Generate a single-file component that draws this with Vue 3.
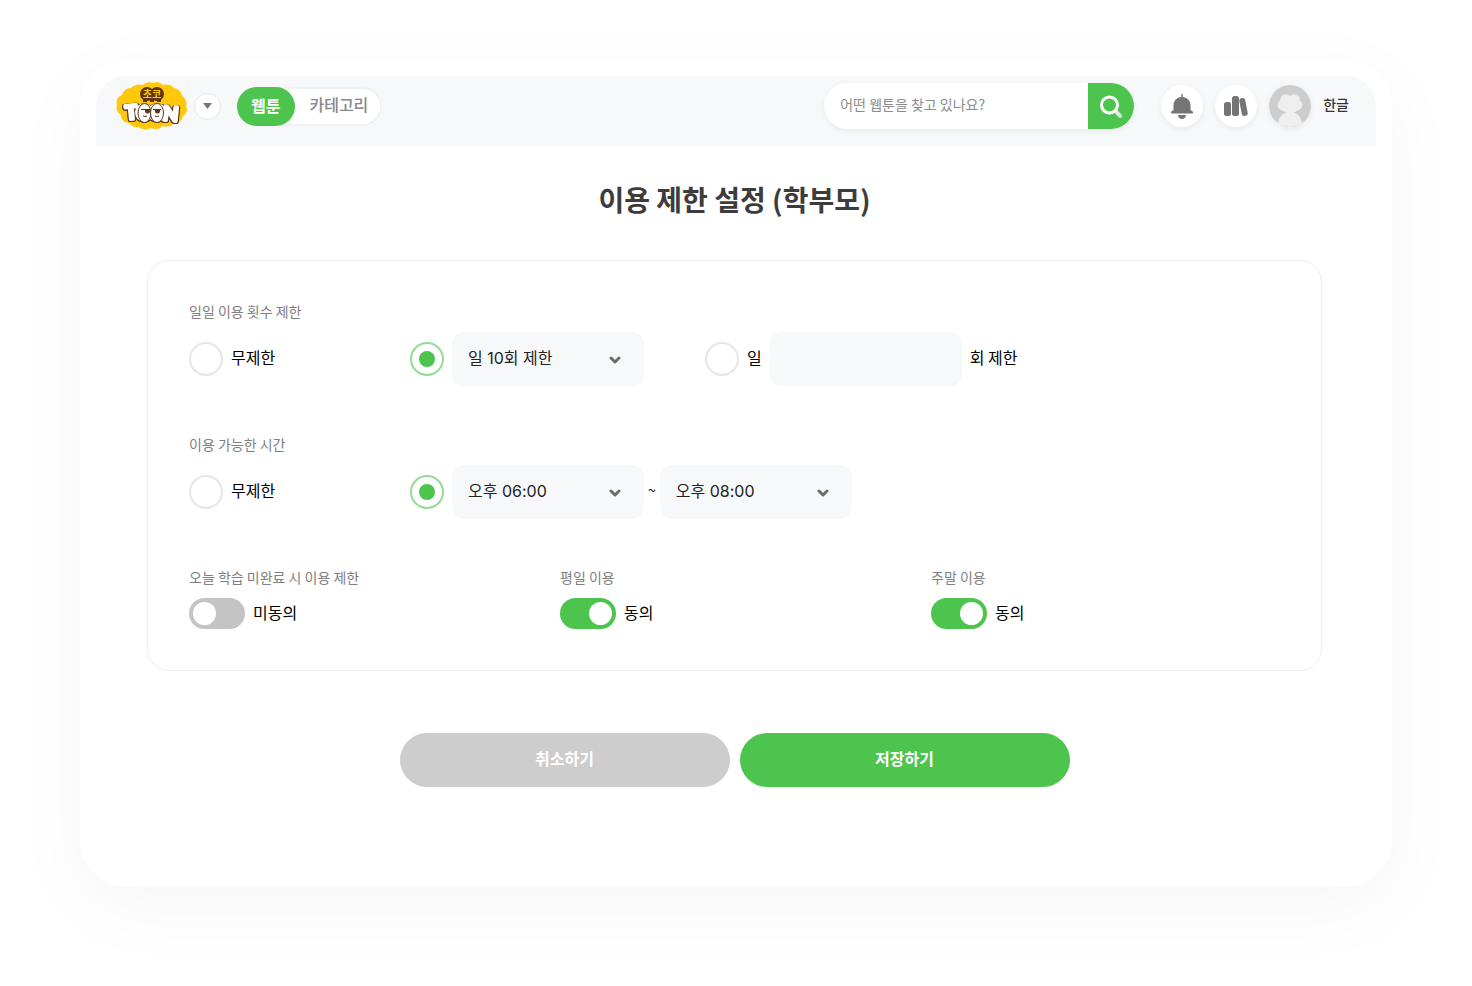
<template>
  <div class="page">
    <div class="window">
      <header class="top-bar">
        <a href="#" class="logo" aria-label="초코 TOON">
          <svg width="72" height="50" viewBox="0 0 72 50">
            <path
              d="M27 4 Q31 0 37 2 Q42 -1 47 4 Q54 2 58 7 Q65 8 66 15 Q72 19 70 25 Q73 31 67 35 Q66 42 58 42 Q54 47 47 45 Q42 50 35 47 Q28 51 23 46 Q16 47 13 42 Q5 41 5 34 Q-1 30 1 24 Q-1 17 6 14 Q8 7 15 7 Q20 2 27 4Z"
              fill="#ffc80a"
            />
            <circle cx="31" cy="13" r="7" fill="#5c3517" />
            <circle cx="41" cy="13" r="7" fill="#5c3517" />
            <path d="M27 17h18v4h-4v-2h-3v2h-4v-2h-3v2h-4z" fill="#5c3517" />
            <text x="36" y="17" class="logo-small">초코</text>
            <text x="16 28 41 54" y="39" rotate="-6 0 0 6" class="logo-big">TOON</text>
            <g stroke="#5c3517" stroke-width="1">
              <ellipse cx="28.500" cy="32" rx="6.500" ry="9.500" fill="#fff" />
              <ellipse cx="41" cy="32" rx="6.500" ry="9.500" fill="#fff" />
              <path d="M25 28.500h9M37 28.500h8M27 35q2 1 4 0M39 35q2 1 4 0" fill="none" />
            </g>
            <path d="M29 28h5v2a2.500 2.500 0 0 1-5 0zM39 28h5v2a2.500 2.500 0 0 1-5 0z" fill="#5c3517" />
          </svg>
        </a>
        <button type="button" class="service-toggle" aria-label="서비스 선택">
          <svg width="9" height="6" viewBox="0 0 9 6"><path d="M0 0h9L4.500 6z" fill="#777" /></svg>
        </button>

        <nav class="tabs">
          <a href="#" class="tab active">웹툰</a>
          <a href="#" class="tab">카테고리</a>
        </nav>

        <form class="search" @submit.prevent>
          <input v-model="keyword" type="text" placeholder="어떤 웹툰을 찾고 있나요?" aria-label="웹툰 검색" />
          <button type="submit" aria-label="검색">
            <svg width="24" height="26" viewBox="0 0 24 26" fill="none">
              <path d="M17 18.500l4 4.500" stroke="#dceedd" stroke-width="4" stroke-linecap="round" />
              <circle cx="10.500" cy="12" r="8" stroke="#fff" stroke-width="3" />
            </svg>
          </button>
        </form>

        <div class="user-menu">
          <button type="button" class="round-button" aria-label="알림">
            <svg width="24" height="26" viewBox="0 0 24 26" fill="#757575">
              <path d="M11.300 1.500q.7-1.500 1.400 0V4c5 .6 7.800 4 7.800 8.500V17l2 1.300q1.500 2.200-.5 2.200H2q-2 0-.5-2.200l2-1.300v-4.500C3.500 8 6.300 4.600 11.300 4z" />
              <path d="M8 22h8q-.5 4-4 4t-4-4z" />
            </svg>
          </button>
          <button type="button" class="round-button" aria-label="내 서재">
            <svg width="24" height="22" viewBox="0 0 24 22" fill="#757575">
              <rect x="0" y="7" width="7" height="14" rx="2.500" />
              <rect x="8" y="1" width="7" height="20" rx="2.500" />
              <rect x="16.500" y="3" width="6" height="18" rx="2.500" transform="rotate(-11 19.500 12)" />
            </svg>
          </button>
          <button type="button" class="round-button" aria-label="내 정보">
            <svg width="42" height="42" viewBox="0 0 41 41">
              <circle cx="20.500" cy="20.500" r="20.500" fill="#cdcdcd" />
              <g fill="#efefef">
                <circle cx="16.500" cy="14.500" r="5.500" />
                <circle cx="24.500" cy="14.500" r="5.500" />
                <circle cx="14" cy="19.500" r="5.500" />
                <circle cx="27" cy="19.500" r="5.500" />
                <ellipse cx="20.500" cy="20" rx="9" ry="7.500" />
                <path d="M9 37.500C9 31 14 26.500 20.500 26.500S32 31 32 37.500A20.500 20.500 0 0 1 9 37.500Z" />
              </g>
            </svg>
          </button>
          <a href="#" class="user-name">한글</a>
        </div>
      </header>

      <main class="content">
        <h1>이용 제한 설정 (학부모)</h1>

        <form @submit.prevent>
          <div class="panel">
            <section class="setting" role="radiogroup" aria-labelledby="count-title">
              <h2 id="count-title">일일 이용 횟수 제한</h2>
              <div class="options">
                <label class="option unlimited">
                  <input v-model="countMode" type="radio" name="count" value="none" />
                  <span class="caption">무제한</span>
                </label>
                <div class="option preset">
                  <input v-model="countMode" type="radio" name="count" value="preset" aria-label="일 제한 횟수 선택" />
                  <div class="select-box">
                    <select v-model="dailyCount" aria-label="일일 이용 횟수">
                      <option v-for="n in counts" :key="n" :value="n">일 {{ n }}회 제한</option>
                    </select>
                    <svg width="12" height="8" viewBox="0 0 12 8"><path d="M2 2l4 4 4-4" /></svg>
                  </div>
                </div>
                <div class="option">
                  <input id="count-custom" v-model="countMode" type="radio" name="count" value="custom" />
                  <label for="count-custom" class="caption">일</label>
                  <input id="custom-count" v-model="customCount" type="text" class="count-input" />
                  <label for="custom-count" class="caption">회 제한</label>
                </div>
              </div>
            </section>

            <section class="setting" role="radiogroup" aria-labelledby="time-title">
              <h2 id="time-title">이용 가능한 시간</h2>
              <div class="options">
                <label class="option unlimited">
                  <input v-model="timeMode" type="radio" name="time" value="none" />
                  <span class="caption">무제한</span>
                </label>
                <div class="option">
                  <input v-model="timeMode" type="radio" name="time" value="range" aria-label="시간 범위 선택" />
                  <div class="time-range">
                    <div class="select-box">
                      <select v-model="startTime" aria-label="시작 시간">
                        <option v-for="t in times" :key="t">{{ t }}</option>
                      </select>
                      <svg width="12" height="8" viewBox="0 0 12 8"><path d="M2 2l4 4 4-4" /></svg>
                    </div>
                    <span class="caption tilde">~</span>
                    <div class="select-box">
                      <select v-model="endTime" aria-label="종료 시간">
                        <option v-for="t in times" :key="t">{{ t }}</option>
                      </select>
                      <svg width="12" height="8" viewBox="0 0 12 8"><path d="M2 2l4 4 4-4" /></svg>
                    </div>
                  </div>
                </div>
              </div>
            </section>

            <div class="agreements">
              <section v-for="item in agreements" :key="item.id" class="setting">
                <h2 :id="item.id">{{ item.title }}</h2>
                <label class="switch">
                  <input v-model="item.on" type="checkbox" role="switch" :aria-describedby="item.id" />
                  <span class="caption">{{ item.on ? '동의' : '미동의' }}</span>
                </label>
              </section>
            </div>
          </div>

          <div class="actions">
            <button type="button" class="cancel">취소하기</button>
            <button type="submit" class="save">저장하기</button>
          </div>
        </form>
      </main>
    </div>
  </div>
</template>

<script setup>
import { ref } from 'vue'

const keyword = ref('')

const counts = [5, 10, 15, 20]
const countMode = ref('preset')
const dailyCount = ref(10)
const customCount = ref('')

const times = ['오후 05:00', '오후 06:00', '오후 07:00', '오후 08:00', '오후 09:00']
const timeMode = ref('range')
const startTime = ref('오후 06:00')
const endTime = ref('오후 08:00')

const agreements = ref([
  { id: 'study', title: '오늘 학습 미완료 시 이용 제한', on: false },
  { id: 'weekday', title: '평일 이용', on: true },
  { id: 'weekend', title: '주말 이용', on: true }
])
</script>

<style>
body {
  margin: 0;
  background: #fff;
}
</style>

<style scoped>
.page {
  padding: 60px 80px 100px;
  font-family: "Noto Sans CJK KR", sans-serif;
  font-size: 16px;
  line-height: 24px;
  color: #000;
}

.page *,
.page *::before {
  box-sizing: border-box;
}

button,
input,
select {
  margin: 0;
  padding: 0;
  border: 0;
  font: inherit;
  color: inherit;
}

button {
  cursor: pointer;
}

a {
  color: inherit;
  text-decoration: none;
}

svg {
  display: block;
}

.window {
  padding: 16px 16px 99px;
  border-radius: 46px;
  background: #fff;
  box-shadow: 0 20px 80px rgba(0, 0, 0, 0.04);
}

/* 상단 바 */
.top-bar {
  display: flex;
  align-items: center;
  padding: 5px 27px 15px 20px;
  border-radius: 30px 30px 0 0;
  background: #f7f8fa;
}

.logo-small {
  font-size: 10px;
  font-weight: 700;
  fill: #ffc80a;
  text-anchor: middle;
}

.logo-big {
  font-family: "Lato", sans-serif;
  font-size: 20px;
  font-weight: 900;
  fill: #fff;
  stroke: #fff;
  stroke-width: 3px;
  stroke-linejoin: round;
  text-anchor: middle;
  filter: drop-shadow(1px 0 0 #5c3517) drop-shadow(-1px 0 0 #5c3517) drop-shadow(0 1px 0 #5c3517);
}

.service-toggle {
  display: flex;
  align-items: center;
  justify-content: center;
  width: 27px;
  height: 27px;
  margin-left: 6px;
  border: 1px solid #e6e7e9;
  border-radius: 50%;
  background: #fff;
}

.tabs {
  display: flex;
  height: 39px;
  margin-left: 16px;
  border: 2px solid #f0f1f2;
  border-left: 0;
  border-radius: 20px;
  background: #fff;
  font-weight: 500;
}

.tab {
  display: flex;
  align-items: center;
  padding: 0 12px 4px 14px;
  color: #888;
}

.tab.active {
  margin: -2px 0;
  padding: 0 15px 2px 14px;
  border-radius: 20px;
  background: #4dc44d;
  color: #fff;
  font-weight: 700;
}

.search {
  display: flex;
  width: 310px;
  height: 46px;
  margin-left: auto;
  border-radius: 23px;
  overflow: hidden;
  background: #fff;
  box-shadow: 0 2px 6px rgba(0, 0, 0, 0.06);
}

.search input {
  flex: 1;
  min-width: 0;
  padding: 0 16px 4px;
  background: transparent;
  font-size: 14px;
  outline: none;
}

.search input::placeholder {
  color: #8c8c8c;
  opacity: 1;
}

.search button {
  display: flex;
  align-items: center;
  justify-content: center;
  width: 46px;
  background: #4dc44d;
}

.user-menu {
  display: flex;
  align-items: center;
  gap: 12px;
  margin-left: 27px;
}

.round-button {
  display: flex;
  align-items: center;
  justify-content: center;
  width: 42px;
  height: 42px;
  border-radius: 50%;
  background: #fff;
  box-shadow: 0 2px 6px rgba(0, 0, 0, 0.06);
}

.user-name {
  padding-bottom: 4px;
  font-size: 14px;
  font-weight: 500;
  color: #333;
}

/* 본문 */
.content {
  padding: 33px 54px 0 51px;
}

h1 {
  margin: 0 0 41px;
  font-size: 28px;
  font-weight: 700;
  line-height: 40px;
  text-align: center;
  color: #3c3c3c;
}

.panel {
  display: flex;
  flex-direction: column;
  gap: 49px;
  padding: 41px;
  border: 1px solid #eee;
  border-radius: 22px;
}

h2 {
  margin: 0 0 12px;
  font-size: 14px;
  font-weight: 400;
  line-height: 18px;
  color: #808080;
}

.options {
  display: flex;
  align-items: center;
  min-height: 54px;
}

.option {
  display: flex;
  align-items: center;
  gap: 8px;
}

.caption {
  padding-bottom: 4px;
}

.unlimited {
  min-width: 221px;
}

.preset {
  min-width: 295px;
}

input[type="radio"] {
  flex: none;
  display: grid;
  place-content: center;
  width: 34px;
  height: 34px;
  border: 2px solid #e6e6e6;
  border-radius: 50%;
  appearance: none;
  background: #fff;
}

input[type="radio"]:checked {
  border-color: #94dc94;
}

input[type="radio"]:checked::before {
  content: "";
  width: 16px;
  height: 16px;
  border-radius: 50%;
  background: #4dc44d;
}

.select-box {
  position: relative;
}

.select-box select,
.count-input {
  width: 192px;
  height: 54px;
  padding: 0 16px 2px;
  border-radius: 12px;
  appearance: none;
  background: #f7f8fa;
  font-family: "Inter", "Noto Sans CJK KR", sans-serif;
  color: #222;
}

.select-box svg {
  position: absolute;
  top: 24px;
  right: 23px;
  fill: none;
  stroke: #6c6c6c;
  stroke-width: 3;
  stroke-linecap: round;
  stroke-linejoin: round;
  pointer-events: none;
}

.time-range {
  display: flex;
  align-items: center;
  gap: 4px;
}

.tilde {
  font-size: 14px;
}

.agreements {
  display: grid;
  grid-template-columns: repeat(3, 1fr);
  gap: 22px;
}

.switch {
  display: flex;
  align-items: center;
  gap: 8px;
}

.switch input {
  display: flex;
  align-items: center;
  width: 56px;
  height: 31px;
  padding: 0 4px;
  border-radius: 16px;
  appearance: none;
  background: #c4c4c4;
}

.switch input::before {
  content: "";
  width: 23px;
  height: 23px;
  border-radius: 50%;
  background: #fff;
}

.switch input:checked {
  justify-content: flex-end;
  background: #4dc44d;
}

.actions {
  display: flex;
  justify-content: center;
  gap: 10px;
  margin-top: 62px;
}

.actions button {
  width: 330px;
  height: 54px;
  padding-bottom: 4px;
  border-radius: 27px;
  color: #fff;
  font-weight: 700;
}

.actions .cancel {
  background: #cdcdcd;
}

.actions .save {
  background: #4dc44d;
}
</style>
